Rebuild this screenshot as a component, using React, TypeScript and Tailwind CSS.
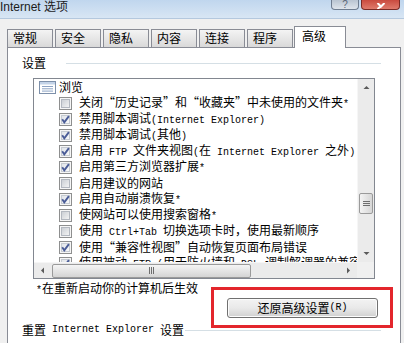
import React from "react";

// mixed CJK / half-width text, sized like SimSun 12px (CJK 12px, latin 6px)
function T({ s }: { s: string }) {
  const parts = s.match(/[\x20-\x7e]+|“|”|[^\x20-\x7e“”]+/g) ?? [];
  return (
    <>
      {parts.map((p, i) => {
        if (/^[\x20-\x7e]+$/.test(p))
          return (
            <span key={i} className="font-['Liberation_Mono',monospace] text-[10px] whitespace-pre">
              {p}
            </span>
          );
        if (p === "“")
          return (
            <span key={i} className="inline-block w-[12px] text-right">
              “
            </span>
          );
        if (p === "”")
          return (
            <span key={i} className="inline-block w-[12px] text-left">
              ”
            </span>
          );
        return <span key={i}>{p}</span>;
      })}
    </>
  );
}

const CheckBox = ({ on }: { on: boolean }) => (
  <svg width="13" height="13" viewBox="0 0 13 13" className="shrink-0">
    <defs>
      <linearGradient id="cbOff" x1="0" y1="0" x2="1" y2="1">
        <stop offset="0" stopColor="#c9cdd3" />
        <stop offset="1" stopColor="#f5f5f5" />
      </linearGradient>
      <linearGradient id="cbOn" x1="0" y1="0" x2="1" y2="1">
        <stop offset="0" stopColor="#dfe3e8" />
        <stop offset="1" stopColor="#fafafa" />
      </linearGradient>
    </defs>
    <rect x="0.5" y="0.5" width="12" height="12" fill="#f6f6f6" stroke="#8e8f8f" />
    <rect x="2.5" y="2.5" width="8" height="8" fill={on ? "url(#cbOn)" : "url(#cbOff)"} stroke={on ? "#c6cbd2" : "#b3b8c0"} />
    {on && <path d="M3.2 6.2 L5.3 9.3 L9.9 3.1" stroke="#4a5c97" strokeWidth="1.9" fill="none" />}
  </svg>
);

const ListIcon = () => (
  <svg width="17" height="13" viewBox="0 0 17 13" className="shrink-0">
    <rect x="0.5" y="0.5" width="16" height="12" fill="#ffffff" stroke="#7d90aa" />
    <rect x="1" y="1" width="15" height="2.5" fill="#c3d3e8" />
    <path d="M3 5.5 H14 M3 7.8 H14 M3 10.1 H14" stroke="#8ca3c4" strokeWidth="1" />
  </svg>
);

const Arrow = ({ dir }: { dir: "up" | "down" | "left" | "right" }) => {
  const d = {
    up: "M0.5 4 L3.5 1 L6.5 4 Z",
    down: "M0.5 1 L3.5 4 L6.5 1 Z",
    left: "M4 0.5 L1 3.5 L4 6.5 Z",
    right: "M1 0.5 L4 3.5 L1 6.5 Z",
  }[dir];
  const vert = dir === "up" || dir === "down";
  return (
    <svg width={vert ? 7 : 5} height={vert ? 5 : 7} viewBox={vert ? "0 0 7 5" : "0 0 5 7"}>
      <path d={d} fill="#5a5a5a" />
    </svg>
  );
};

const rows: { text: string; on: boolean }[] = [
  { text: "关闭“历史记录”和“收藏夹”中未使用的文件夹*", on: false },
  { text: "禁用脚本调试(Internet Explorer)", on: true },
  { text: "禁用脚本调试(其他)", on: true },
  { text: "启用 FTP 文件夹视图(在 Internet Explorer 之外)", on: true },
  { text: "启用第三方浏览器扩展*", on: true },
  { text: "启用建议的网站", on: false },
  { text: "启用自动崩溃恢复*", on: true },
  { text: "使网站可以使用搜索窗格*", on: false },
  { text: "使用 Ctrl+Tab 切换选项卡时，使用最新顺序", on: false },
  { text: "使用“兼容性视图”自动恢复页面布局错误", on: true },
  { text: "使用被动 FTP (用于防火墙和 DSL 调制解调器的兼容)", on: true },
];

const tabs = ["常规", "安全", "隐私", "内容", "连接", "程序"];

export default function App() {
  return (
    <div className="relative w-[404px] h-[343px] overflow-hidden bg-[#f0f0f0] flex flex-col font-['Noto_Sans_CJK_SC',sans-serif] text-black">
      {/* title bar */}
      <div className="h-[19px] shrink-0 flex items-start bg-gradient-to-b from-[#c0d6ee] to-[#d8e6f4] border-b border-[#b4c8de]">
        <span className="text-[12px] leading-[14px] font-['Liberation_Sans','Noto_Sans_CJK_SC',sans-serif] text-[#1b1b1b]">
          Internet 选项
        </span>
        <div className="ml-auto mr-[4px] flex gap-[2px]">
          <div className="w-[28px] h-[10px] rounded-b-[4px] border border-t-0 border-[#6f7d90] bg-gradient-to-b from-[#b9c4d1] to-[#dfe5ec] flex items-end justify-center overflow-hidden">
            <span className="text-[10px] leading-[9px] text-[#5a6676] font-['Liberation_Sans',sans-serif]">?</span>
          </div>
          <div className="w-[39px] h-[10px] rounded-b-[4px] border border-t-0 border-[#7a2a25] bg-gradient-to-b from-[#c94a3f] to-[#e07a6c] flex items-end justify-center">
            <svg width="10" height="6" viewBox="0 0 10 6">
              <path d="M1.5 0 L5 3.5 L8.5 0 M1.5 6 L5 3" stroke="#ffffff" strokeWidth="2" fill="none" />
            </svg>
          </div>
        </div>
      </div>

      {/* tabs */}
      <div className="h-[28px] shrink-0 flex items-end pl-[7px] pt-[7px]">
        {tabs.map((t, i) => (
          <div
            key={t}
            className={
              "h-[18px] w-[46px] border border-b-0 border-[#898c95] bg-gradient-to-b from-[#f4f4f4] to-[#d9d9d9] pl-[5px] text-[12px] leading-[16px] " +
              (i > 0 ? "ml-[2px]" : "")
            }
          >
            {t}
          </div>
        ))}
        <div className="relative z-10 ml-[1px] -mb-[1px] h-[22px] w-[52px] border border-b-0 border-[#898c95] bg-white pl-[7px] text-[12px] leading-[18px]">
          高级
        </div>
      </div>

      {/* panel */}
      <div className="ml-[7px] w-[394px] flex-1 border border-[#898c95] bg-white flex flex-col text-[12px]">
        <div className="mt-[7px] h-[16px] flex items-center pl-[14px] leading-[16px]">
          <T s="设置" />
          <div className="ml-[20px] mr-[19px] flex-1 h-px bg-[#d5dfe5]" />
        </div>

        {/* listbox */}
        <div className="mt-[7px] ml-[25px] w-[342px] h-[201px] shrink-0 border border-[#828790] flex flex-col">
          <div className="flex h-[183px]">
            <div className="flex-1 overflow-hidden leading-[16px]">
              <div className="h-[16px] flex items-center pl-[5px] whitespace-nowrap">
                <ListIcon />
                <span className="ml-[3px]">
                  <T s="浏览" />
                </span>
              </div>
              {rows.map((r) => (
                <div key={r.text} className="h-[16px] flex items-center pl-[25px] whitespace-nowrap">
                  <CheckBox on={r.on} />
                  <span className="ml-[7px]">
                    <T s={r.text} />
                  </span>
                </div>
              ))}
            </div>
            {/* vertical scrollbar */}
            <div className="w-[17px] bg-[#ebebeb] border-l border-[#f6f6f6] flex flex-col">
              <div className="h-[17px] flex items-center justify-center">
                <Arrow dir="up" />
              </div>
              <div className="mt-[97px] mx-[1px] h-[21px] rounded-[2px] border border-[#9a9a9a] bg-gradient-to-r from-[#f4f4f4] to-[#d6d6d6] flex flex-col items-center justify-center gap-[1px]">
                <div className="w-[7px] h-px bg-[#6e6e6e]" />
                <div className="w-[7px] h-px bg-[#6e6e6e]" />
                <div className="w-[7px] h-px bg-[#6e6e6e]" />
              </div>
              <div className="flex-1" />
              <div className="h-[17px] flex items-center justify-center">
                <Arrow dir="down" />
              </div>
            </div>
          </div>
          {/* horizontal scrollbar */}
          <div className="flex h-[16px]">
            <div className="flex-1 bg-[#ebebeb] border-t border-[#f6f6f6] flex items-center">
              <div className="w-[17px] flex items-center justify-center">
                <Arrow dir="left" />
              </div>
              <div className="ml-[1px] w-[199px] h-[14px] rounded-[2px] border border-[#9a9a9a] bg-gradient-to-b from-[#f5f5f5] to-[#d4d4d4] flex items-center justify-center gap-[1px]">
                <div className="w-px h-[7px] bg-[#6e6e6e]" />
                <div className="w-px h-[7px] bg-[#6e6e6e]" />
                <div className="w-px h-[7px] bg-[#6e6e6e]" />
              </div>
              <div className="flex-1" />
              <div className="w-[17px] flex items-center justify-center">
                <Arrow dir="right" />
              </div>
            </div>
            <div className="w-[17px] bg-[#f0f0f0]" />
          </div>
        </div>

        <div className="mt-[1px] h-[16px] pl-[28px] leading-[16px] whitespace-nowrap">
          <T s="*在重新启动你的计算机后生效" />
        </div>

        <div className="mt-[2px] pl-[219px]">
          <button className="w-[151px] h-[20px] rounded-[3px] border border-[#707070] bg-gradient-to-b from-[#f3f3f3] via-[#e9e9e9] to-[#d0d0d0] text-[12px] leading-[18px] flex items-center justify-center shadow-[inset_0_0_0_1px_#fcfcfc]">
            <T s="还原高级设置(R)" />
          </button>
        </div>

        <div className="mt-[4px] h-[16px] flex items-center pl-[14px] leading-[16px] whitespace-nowrap">
          <T s="重置 Internet Explorer 设置" />
          <div className="ml-[1px] mr-[19px] flex-1 h-px bg-[#d5dfe5]" />
        </div>
        <div className="mt-[3px] h-[16px] pl-[28px] leading-[16px] whitespace-nowrap">
          <T s="将 Internet Explorer 设置重置为默认设置。" />
        </div>
      </div>

      {/* red annotation box */}
      <div className="absolute left-[211px] top-[287px] w-[182px] h-[41px] border-[3px] border-[#e3262c]" />
    </div>
  );
}
